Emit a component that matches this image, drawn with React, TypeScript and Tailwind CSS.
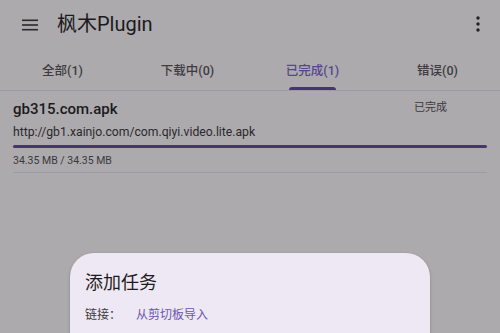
import React from "react";

const font = { fontFamily: 'Roboto, "Noto Sans CJK SC", sans-serif' };

export default function App() {
  const tabs = ["全部(1)", "下载中(0)", "已完成(1)", "错误(0)"];
  return (
    <div className="relative w-[500px] h-[333px] overflow-hidden bg-[#adaaad]" style={font}>
      {/* top bar */}
      <div className="flex items-center h-[48px] pl-[22px] pr-[20px]">
        <svg width="16" height="12" viewBox="0 0 16 12" className="mt-[1px]">
          <rect x="0" y="0.5" width="16" height="1.6" fill="#2a292c" />
          <rect x="0" y="5.2" width="16" height="1.6" fill="#2a292c" />
          <rect x="0" y="9.9" width="16" height="1.6" fill="#2a292c" />
        </svg>
        <div className="ml-[19px] text-[20px] leading-none text-[#1b1a1d]">枫木Plugin</div>
        <div className="flex-1" />
        <svg width="4" height="16" viewBox="0 0 4 16">
          <circle cx="2" cy="2" r="1.7" fill="#222124" />
          <circle cx="2" cy="8" r="1.7" fill="#222124" />
          <circle cx="2" cy="14" r="1.7" fill="#222124" />
        </svg>
      </div>
      {/* tabs */}
      <div className="flex h-[43px] border-b border-[#9d9b9f]">
        {tabs.map((t, i) => (
          <div key={t} className="flex-1 flex flex-col items-center justify-end">
            <div
              className={
                "text-[12.5px] font-medium leading-none mb-[10px] " +
                (i === 2 ? "text-[#54478c]" : "text-[#3e3c41]")
              }
            >
              {t}
            </div>
            <div className={"h-[3px] w-[47px] rounded-t-[3px] " + (i === 2 ? "bg-[#463670]" : "bg-transparent")} />
          </div>
        ))}
      </div>
      {/* item */}
      <div className="px-[13px] pt-[9px]">
        <div className="flex items-start">
          <div className="text-[15px] font-medium leading-[18px] text-[#1b1a1d]">gb315.com.apk</div>
          <div className="flex-1" />
          <div className="text-[11px] leading-[14px] text-[#3a383d] mr-[40px] mt-[1px]">已完成</div>
        </div>
        <div className="mt-[7px] text-[12.2px] leading-[15px] text-[#2a292c]">
          http://gb1.xainjo.com/com.qiyi.video.lite.apk
        </div>
        <div className="mt-[5px] h-[3px] rounded-full bg-[#463670]" />
        <div className="mt-[7px] text-[10.5px] leading-[12px] text-[#3a383d]">34.35 MB / 34.35 MB</div>
        <div className="mt-[5px] h-px bg-[#9d9b9f]" />
      </div>
      {/* dialog */}
      <div className="absolute left-[70px] top-[253px] w-[360px] h-[120px] rounded-[24px] bg-[#ede8f3] shadow-[0_1px_3px_rgba(0,0,0,0.25)] px-[15px] pt-[19px]">
        <div className="text-[18px] leading-[22px] text-[#1d1b20]">添加任务</div>
        <div className="flex items-center mt-[13px] text-[12px] leading-[16px]">
          <span className="text-[#3c3a40] w-[51px]">链接：</span>
          <span className="text-[#6a56b0]">从剪切板导入</span>
        </div>
      </div>
    </div>
  );
}
